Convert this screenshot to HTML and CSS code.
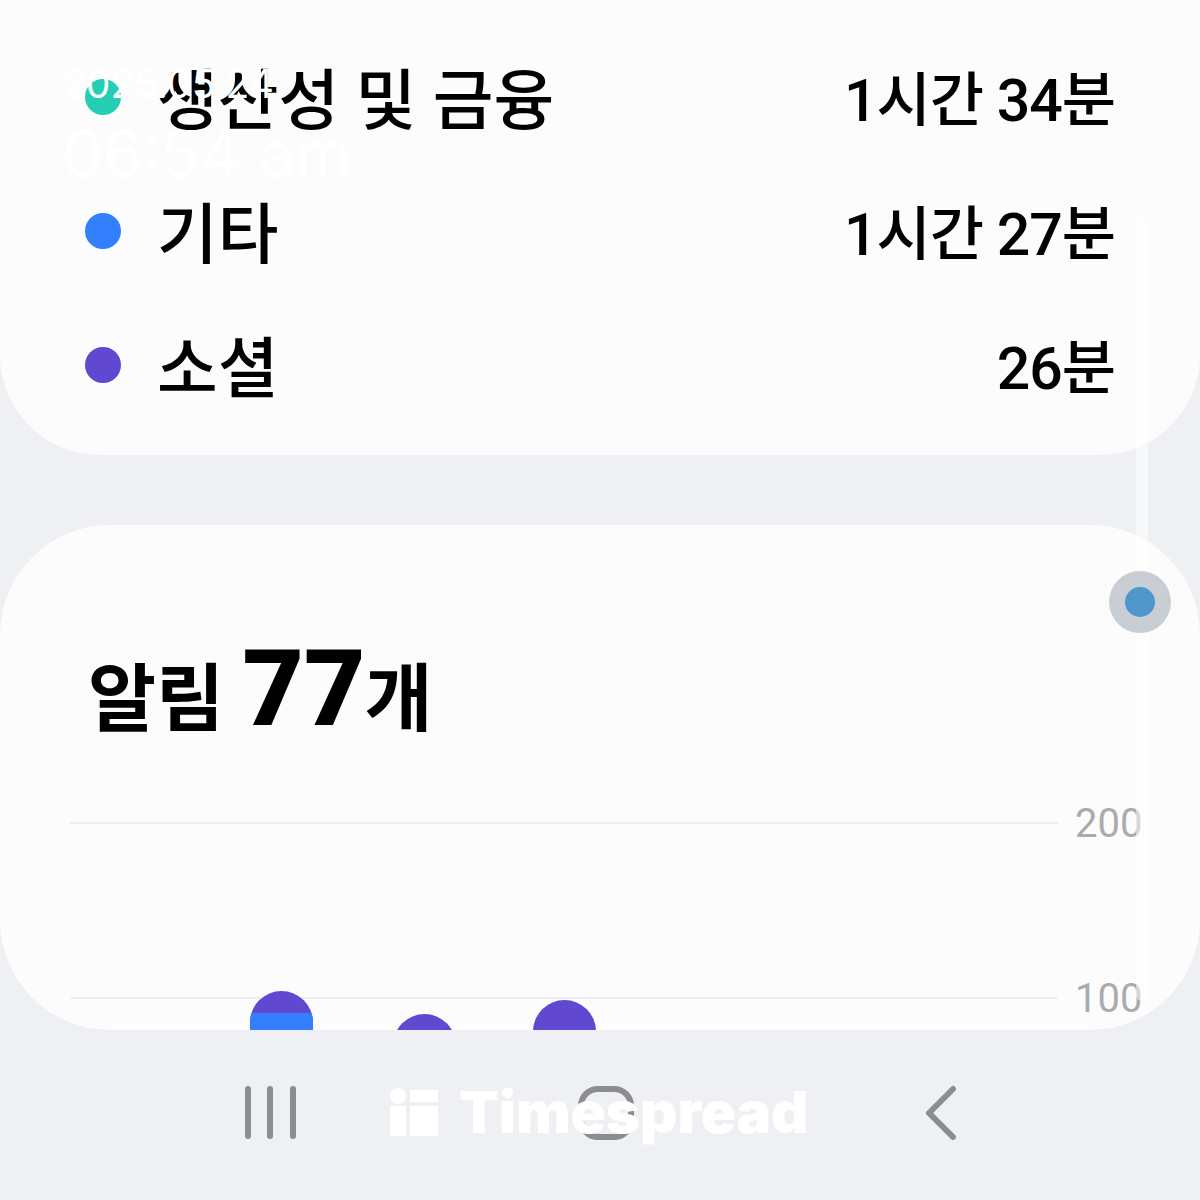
FILE: index.html
```html
<!DOCTYPE html>
<html lang="ko">
<head>
    <meta charset="UTF-8">
    <meta name="viewport" content="width=device-width, initial-scale=1.0">
    <title>디지털 웰빙</title>
    <link rel="stylesheet" href="styles.css">
</head>
<body>
    <div class="screen">
        <section class="card usage-card">
            <div class="usage-row">
                <span class="dot dot-green"></span>
                <span class="usage-name">생산성 및 금융</span>
                <span class="usage-time">1시간 34분</span>
            </div>
            <div class="usage-row">
                <span class="dot dot-blue"></span>
                <span class="usage-name">기타</span>
                <span class="usage-time">1시간 27분</span>
            </div>
            <div class="usage-row">
                <span class="dot dot-purple"></span>
                <span class="usage-name">소셜</span>
                <span class="usage-time">26분</span>
            </div>
        </section>

        <section class="card notify-card">
            <h1 class="notify-title">알림 <strong>77</strong><span class="notify-unit">개</span></h1>
            <div class="chart">
                <div class="grid-row"><span class="grid-line"></span><span class="grid-label">200</span></div>
                <div class="grid-row"><span class="grid-line"></span><span class="grid-label">100</span></div>
                <div class="bars">
                    <div class="bar bar-one"><span class="bar-top"></span></div>
                    <div class="bar bar-two"></div>
                    <div class="bar bar-three"></div>
                </div>
            </div>
        </section>

        <nav class="navbar">
            <svg class="nav-icon" width="56" height="56" viewBox="0 0 56 56">
                <g fill="none" stroke="#8b8d90" stroke-width="6" stroke-linecap="round">
                    <path d="M5 4V51"/>
                    <path d="M27 4V51"/>
                    <path d="M50 4V51"/>
                </g>
            </svg>
            <svg class="nav-icon" width="60" height="58" viewBox="0 0 60 58">
                <rect x="5" y="5" width="50" height="48" rx="17" fill="none" stroke="#8b8d90" stroke-width="6"/>
            </svg>
            <svg class="nav-icon" width="36" height="56" viewBox="0 0 36 56">
                <path d="M30 4L6 28L30 52" fill="none" stroke="#8b8d90" stroke-width="6" stroke-linecap="round" stroke-linejoin="round"/>
            </svg>
        </nav>
    </div>

    <div class="scroll-track"></div>
    <div class="scroll-thumb"><span></span></div>

    <div class="stamp">
        <div class="stamp-date">2025.05.24</div>
        <div class="stamp-time">06:54 am</div>
    </div>

    <div class="brand">
        <svg width="48" height="48" viewBox="0 0 48 48">
            <circle cx="8" cy="8" r="8" fill="#fff"/>
            <rect x="20" y="2" width="28" height="12" fill="#fff"/>
            <rect x="0" y="18" width="16" height="30" fill="#fff"/>
            <rect x="20" y="18" width="28" height="30" fill="#fff"/>
        </svg>
        <span class="brand-name">Timespread</span>
    </div>
</body>
</html>
```

FILE: styles.css
```css
body {
    margin: 0;
    background-color: #eff0f4;
    font-family: 'Roboto', 'Noto Sans CJK KR', sans-serif;
    color: #000000;
}

.screen {
    display: flex;
    flex-direction: column;
    height: 1200px;
    overflow: hidden;
}

.card {
    background-color: #fcfcfd;
    box-sizing: border-box;
}

.usage-card {
    height: 455px;
    padding-top: 30px;
    border-radius: 0 0 100px 100px;
    flex-shrink: 0;
}

.usage-row {
    display: flex;
    align-items: center;
    height: 134px;
    padding: 0 85px;
}

.dot {
    width: 36px;
    height: 36px;
    border-radius: 50%;
    margin-right: 36px;
}

.dot-green {
    background-color: #26cdb5;
}

.dot-blue {
    background-color: #347ffe;
}

.dot-purple {
    background-color: #6148d0;
}

.usage-name {
    flex: 1;
    margin-bottom: 4px;
    font-size: 66px;
    font-weight: 500;
}

.usage-time {
    margin-bottom: 4px;
    font-size: 59px;
    font-weight: 500;
    letter-spacing: -1px;
}

.notify-card {
    height: 505px;
    margin-top: 70px;
    padding-top: 112px;
    border-radius: 110px;
    overflow: hidden;
    flex-shrink: 0;
}

.notify-title {
    margin: 0 0 0 88px;
    height: 104px;
    font-size: 74px;
    font-weight: 700;
    line-height: 104px;
}

.notify-title strong {
    font-size: 106px;
    font-weight: 900;
}

.notify-unit {
    margin-left: -1px;
    font-size: 74px;
}

.chart {
    position: relative;
    margin-top: 62px;
}

.grid-row {
    display: flex;
    align-items: center;
    height: 40px;
    padding-left: 70px;
    margin-bottom: 135px;
}

.grid-line {
    width: 988px;
    height: 2px;
    background-color: #eeeff1;
}

.grid-label {
    margin-left: 17px;
    font-size: 40px;
    color: #aaabae;
}

.bars {
    position: absolute;
    left: 250px;
    top: 188px;
    display: flex;
    align-items: flex-start;
}

.bar {
    width: 63px;
    height: 120px;
    border-radius: 32px 32px 0 0;
    background-color: #6148d0;
    overflow: hidden;
}

.bar-top {
    display: block;
    height: 100%;
    margin-top: 22px;
    background-color: #347ffe;
}

.bar-two {
    margin: 23px 0 0 80px;
}

.bar-three {
    margin: 9px 0 0 77px;
}

.navbar {
    flex: 1;
    display: flex;
    align-items: center;
    padding-bottom: 4px;
    padding-left: 243px;
}

.nav-icon {
    display: block;
}

.nav-icon:nth-child(2) {
    margin-left: 277px;
}

.nav-icon:nth-child(3) {
    margin-left: 287px;
}

/* faint scrollbar on the right edge */
.scroll-track {
    position: absolute;
    left: 1136px;
    top: 216px;
    width: 12px;
    height: 785px;
    border-radius: 6px;
    background-color: #ffffff;
    opacity: 0.5;
}

.scroll-thumb {
    position: absolute;
    left: 1109px;
    top: 571px;
    width: 62px;
    height: 62px;
    border-radius: 50%;
    background-color: #c8ced3;
    display: flex;
    align-items: center;
    justify-content: center;
}

.scroll-thumb span {
    width: 30px;
    height: 30px;
    border-radius: 50%;
    background-color: #4f97ca;
}

/* white stamp and logo laid over the screenshot */
.stamp {
    position: absolute;
    left: 62px;
    top: 55px;
    font-family: 'Inter', sans-serif;
    color: #ffffff;
}

.stamp-date {
    font-size: 39px;
    line-height: 58px;
}

.stamp-time {
    font-size: 64px;
    line-height: 82px;
}

.brand {
    position: absolute;
    left: 390px;
    top: 1082px;
    display: flex;
    align-items: center;
    gap: 21px;
    height: 60px;
    color: #ffffff;
}

.brand-name {
    font-family: 'Inter', sans-serif;
    font-size: 58px;
    font-weight: 900;
    letter-spacing: 0;
}
```
